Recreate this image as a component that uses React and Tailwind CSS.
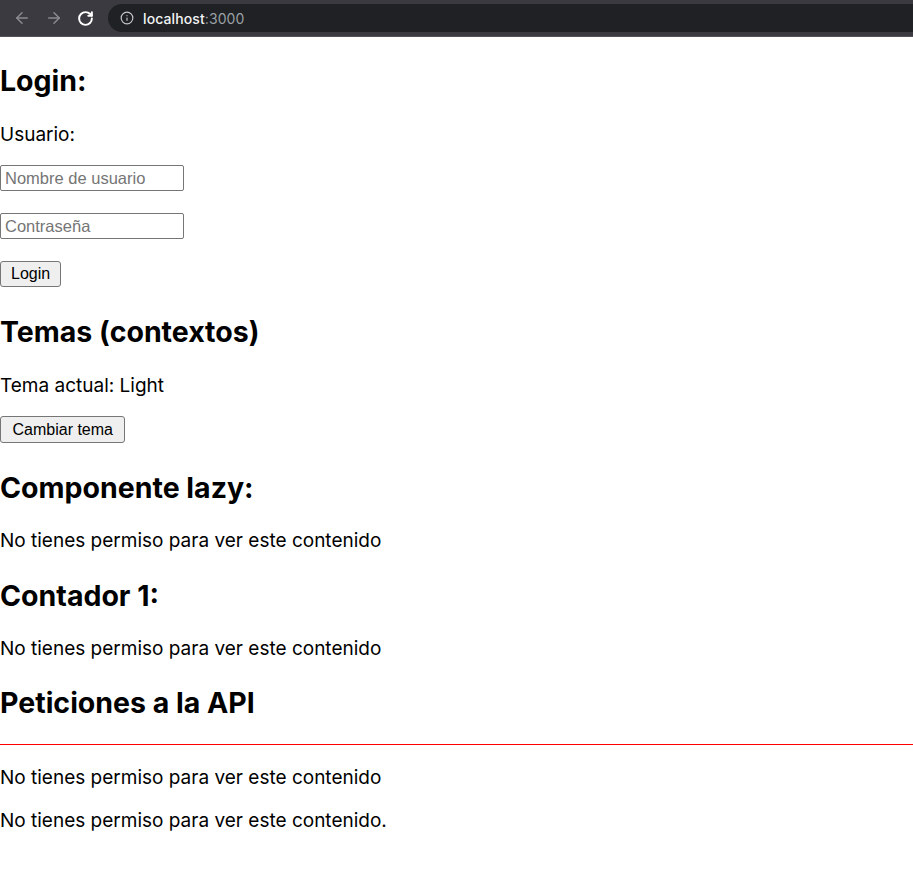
import { ArrowLeft, ArrowRight, RotateCw, Info } from "lucide-react";

function BrowserBar() {
  return (
    <div className="h-[37px] bg-[#3b3a40] border-b border-[#55545a] flex items-center">
      <div className="flex items-center w-[108px] pl-[13px] gap-[14px]">
        <ArrowLeft size={18} strokeWidth={2} className="text-[#8b8a90]" />
        <ArrowRight size={18} strokeWidth={2} className="text-[#8b8a90]" />
        <RotateCw size={17} strokeWidth={2.8} className="text-white" />
      </div>
      <div className="flex-1 h-[28px] bg-[#202124] rounded-l-full flex items-center pl-[12px] gap-[9px]">
        <Info size={14} strokeWidth={2} className="text-[#c4c7cc]" />
        <span className="text-[14px] font-['Inter',sans-serif] tracking-[0.1px]">
          <span className="text-[#f1f3f4] font-medium">localhost</span>
          <span className="text-[#9aa0a6]">:3000</span>
        </span>
      </div>
    </div>
  );
}

function Aviso({ texto, className }) {
  return <p className={`text-[19px] leading-[23px] ${className}`}>{texto}</p>;
}

export default function App() {
  const inputCls =
    "w-[184px] h-[26px] border border-[#767676] rounded-[2px] px-[4px] text-[16.5px] font-['Liberation_Sans',Arial,sans-serif] placeholder:text-[#757575] outline-none";
  const buttonCls =
    "bg-[#efefef] border border-[#767676] rounded-[3px] text-[16px] text-black font-['Liberation_Sans',Arial,sans-serif]";
  const h2Cls = "text-[28.5px] leading-[34px] font-bold";

  return (
    <div className="min-h-screen bg-white text-black font-['Inter',sans-serif]">
      <BrowserBar />

      <main className="flex flex-col items-start">
        {/* Login */}
        <h2 className={`mt-[27px] ${h2Cls}`}>Login:</h2>
        <p className="mt-[25px] text-[19px] leading-[23px]">Usuario:</p>
        <input className={`mt-[19px] ${inputCls}`} placeholder="Nombre de usuario" />
        <input className={`mt-[22px] ${inputCls}`} type="password" placeholder="Contraseña" />
        <button className={`mt-[22px] h-[26px] px-[10px] ${buttonCls}`}>Login</button>

        {/* Temas */}
        <h2 className={`mt-[28px] ${h2Cls}`}>Temas (contextos)</h2>
        <p className="mt-[25px] text-[19px] leading-[23px]">Tema actual: Light</p>
        <button className={`mt-[19px] h-[27px] px-[11.5px] ${buttonCls}`}>Cambiar tema</button>

        {/* Lazy */}
        <h2 className={`mt-[28px] ${h2Cls}`}>Componente lazy:</h2>
        <Aviso className="mt-[24px]" texto="No tienes permiso para ver este contenido" />

        {/* Contador */}
        <h2 className={`mt-[27px] ${h2Cls}`}>Contador 1:</h2>
        <Aviso className="mt-[24px]" texto="No tienes permiso para ver este contenido" />

        {/* API */}
        <h2 className={`mt-[26px] ${h2Cls}`}>Peticiones a la API</h2>
        <div className="mt-[24px] w-full h-px bg-[#ff0000]" />
        <Aviso className="mt-[21px]" texto="No tienes permiso para ver este contenido" />
        <Aviso className="mt-[20px]" texto="No tienes permiso para ver este contenido." />
      </main>
    </div>
  );
}
